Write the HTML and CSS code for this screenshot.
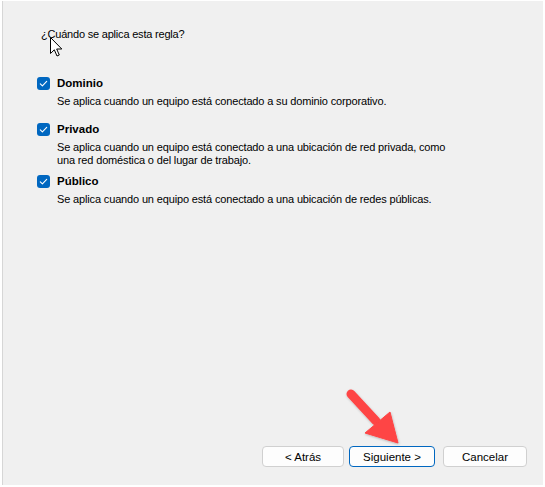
FILE: index.html
```html
<!DOCTYPE html>
<html lang="es">
<head>
<meta charset="utf-8">
<title>Perfil</title>
<link rel="stylesheet" href="styles.css">
</head>
<body>
<div class="frame">
  <p class="question">¿Cuándo se aplica esta regla?</p>
  <div class="options">
    <div class="option option-first">
      <div class="head"><span class="check"><svg viewBox="0 0 13 13" width="13" height="13"><path d="M3.3 6.8 L5.4 8.8 L9.7 4.4" fill="none" stroke="#fff" stroke-width="1.1" stroke-linecap="round" stroke-linejoin="round"/></svg></span><span class="title">Dominio</span></div>
      <p class="desc">Se aplica cuando un equipo está conectado a su dominio corporativo.</p>
    </div>
    <div class="option option-second">
      <div class="head"><span class="check"><svg viewBox="0 0 13 13" width="13" height="13"><path d="M3.3 6.8 L5.4 8.8 L9.7 4.4" fill="none" stroke="#fff" stroke-width="1.1" stroke-linecap="round" stroke-linejoin="round"/></svg></span><span class="title">Privado</span></div>
      <p class="desc">Se aplica cuando un equipo está conectado a una ubicación de red privada, como<br>una red doméstica o del lugar de trabajo.</p>
    </div>
    <div class="option option-third">
      <div class="head"><span class="check"><svg viewBox="0 0 13 13" width="13" height="13"><path d="M3.3 6.8 L5.4 8.8 L9.7 4.4" fill="none" stroke="#fff" stroke-width="1.1" stroke-linecap="round" stroke-linejoin="round"/></svg></span><span class="title">Público</span></div>
      <p class="desc">Se aplica cuando un equipo está conectado a una ubicación de redes públicas.</p>
    </div>
  </div>
  <div class="footer">
    <button class="btn btn-back">&lt; Atrás</button>
    <button class="btn btn-next">Siguiente &gt;</button>
    <button class="btn btn-cancel">Cancelar</button>
  </div>

  <svg class="cursor" width="14" height="22" viewBox="0 0 14 22">
    <path d="M0.5 0.5 L0.5 16.5 L4.3 12.8 L7 19 L9.3 18 L6.7 12 L11.8 12 Z" fill="#fff" stroke="#000" stroke-width="1" stroke-linejoin="round"/>
  </svg>
  <svg class="annot-arrow" width="70" height="70" viewBox="0 0 70 70">
    <defs>
      <filter id="sh" x="-20%" y="-20%" width="140%" height="140%">
        <feDropShadow dx="0.5" dy="1" stdDeviation="1" flood-color="#000" flood-opacity="0.25"/>
      </filter>
    </defs>
    <g filter="url(#sh)" fill="#fe4444" stroke="#fe4444">
      <line x1="9" y1="13" x2="34" y2="40" stroke-width="9" stroke-linecap="round"/>
      <polygon points="23,52 48,31 56,62" stroke-width="1" stroke-linejoin="round"/>
    </g>
  </svg>
</div>
</body>
</html>
```
FILE: styles.css
```css
html, body {
  margin: 0;
  padding: 0;
  background: #ffffff;
}

body {
  width: 545px;
  height: 487px;
  overflow: hidden;
  font-family: "Liberation Sans", Arial, sans-serif;
  font-size: 11px;
  color: #000;
}

.frame {
  position: relative;
  box-sizing: border-box;
  margin: 1px 2px 0 2px;
  height: 484px;
  border-left: 1px solid #d6d6d6;
  background: #f0f0f0;
  display: flex;
  flex-direction: column;
  padding: 27px 0 18px 0;
}

.question {
  margin: 0 0 0 38px;
  line-height: 13px;
  font-size: 11px;
  letter-spacing: -0.2px;
}

.options {
  margin-top: 36px;
  padding-left: 34px;
  display: flex;
  flex-direction: column;
}

.option-second { margin-top: 15px; }
.option-third { margin-top: 8px; }

.head {
  display: flex;
  align-items: center;
  height: 13px;
}

.check {
  width: 13px;
  height: 13px;
  border-radius: 3px;
  background: #0067c0;
  display: flex;
  align-items: center;
  justify-content: center;
  margin-right: 7px;
}

.check svg { display: block; }

.title {
  font-weight: bold;
  font-size: 11.5px;
  line-height: 13px;
}

.desc {
  margin: 5px 0 0 20px;
  line-height: 13px;
  font-size: 11px;
  letter-spacing: -0.15px;
}

.footer {
  margin-top: auto;
  display: flex;
  justify-content: flex-end;
  padding-right: 16px;
}

.btn {
  box-sizing: border-box;
  height: 21px;
  padding: 0;
  font-family: "Liberation Sans", Arial, sans-serif;
  font-size: 11.5px;
  color: #000;
  background: #fdfdfd;
  border: 1px solid #d0d0d0;
  border-radius: 4px;
}

.btn-back { width: 82px; }
.btn-next { width: 86px; margin-left: 5px; border-color: #0067c0; }
.btn-cancel { width: 84px; margin-left: 8px; }

.cursor {
  position: absolute;
  left: 47px;
  top: 36px;
}

.annot-arrow {
  position: absolute;
  left: 339px;
  top: 380px;
}
```
